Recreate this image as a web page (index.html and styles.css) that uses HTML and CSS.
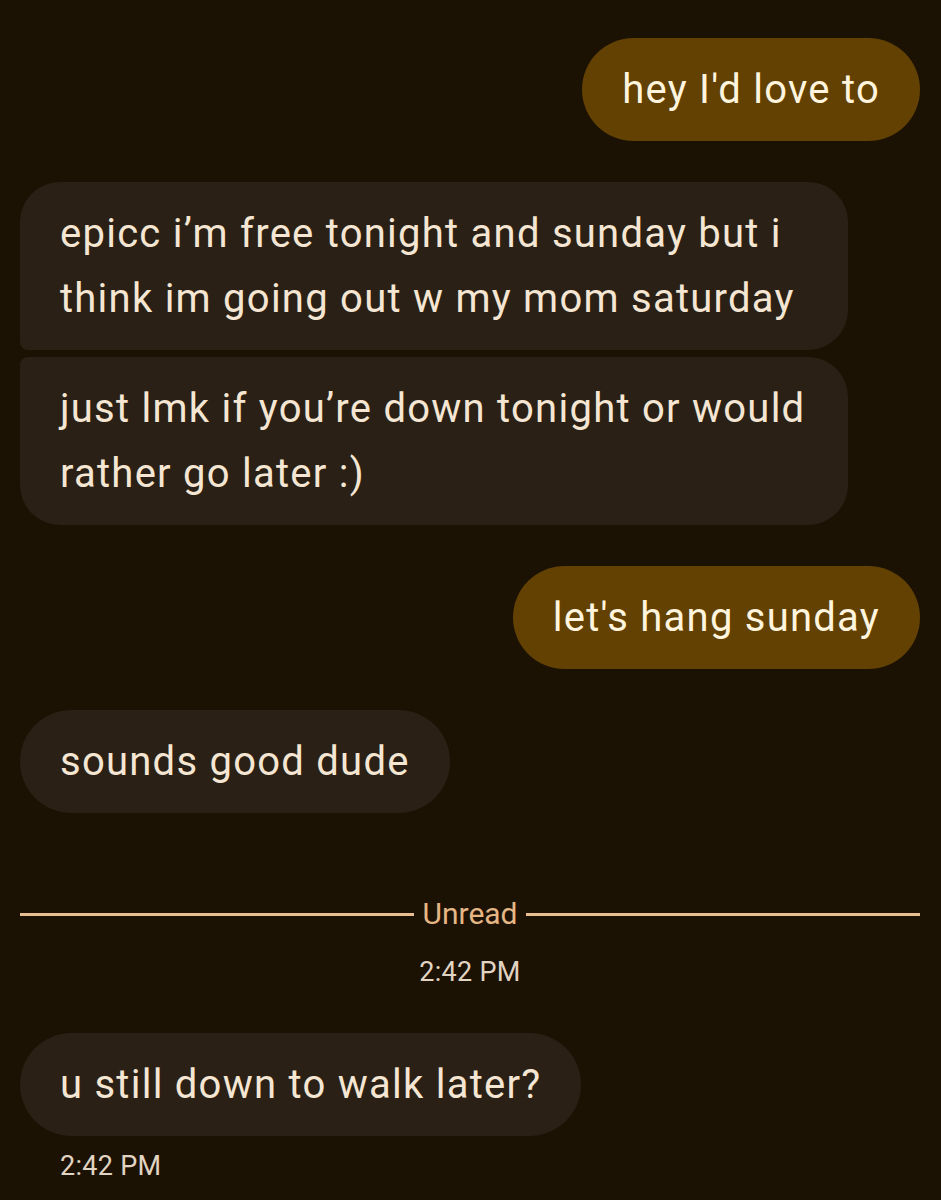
FILE: index.html
```html
<!DOCTYPE html>
<html lang="en">
<head>
    <meta charset="UTF-8">
    <meta name="viewport" content="width=device-width, initial-scale=1.0">
    <title>Messages</title>
    <link rel="stylesheet" href="styles.css">
</head>
<body>
    <div class="thread">
        <div class="row sent">
            <div class="bubble">hey I'd love to</div>
        </div>

        <!-- grouped incoming messages -->
        <div class="group">
            <div class="row received">
                <div class="bubble first">epicc i’m free tonight and sunday but i think im going out w my mom saturday</div>
            </div>
            <div class="row received">
                <div class="bubble last">just lmk if you’re down tonight or would rather go later :)</div>
            </div>
        </div>

        <div class="row sent">
            <div class="bubble">let's hang sunday</div>
        </div>

        <div class="row received">
            <div class="bubble">sounds good dude</div>
        </div>

        <div class="unread">
            <span class="line"></span>
            <span class="unread-label">Unread</span>
            <span class="line"></span>
        </div>

        <div class="time center">2:42 PM</div>

        <div class="row received latest">
            <div class="bubble">u still down to walk later?</div>
        </div>
        <div class="time below">2:42 PM</div>
    </div>
</body>
</html>
```

FILE: styles.css
```css
/* General Reset */
* {
    margin: 0;
    padding: 0;
    box-sizing: border-box;
}

body {
    font-family: Roboto, "Noto Sans", sans-serif;
    background-color: #1c1204; /* dark brown */
    color: #f5e6d3;
    height: 1200px;
    overflow: hidden;
}

.thread {
    display: flex;
    flex-direction: column;
    gap: 41px;
    padding: 38px 21px 0 20px;
}

.group {
    display: flex;
    flex-direction: column;
    gap: 7px;
}

.row {
    display: flex;
}

.row.sent {
    justify-content: flex-end;
}

.row.latest {
    margin-top: 5px;
}

.bubble {
    font-size: 40px;
    letter-spacing: 1.25px;
    line-height: 65px;
    padding: 19px 40px;
    border-radius: 52px;
    max-width: 828px;
}

.sent .bubble {
    background: #624103;
    color: #fff4dd;
}

.received .bubble {
    background: #2a2015;
    color: #f5e6d3;
}

.received .bubble.first {
    border-radius: 40px 40px 40px 8px;
}

.received .bubble.last {
    border-radius: 8px 40px 40px 40px;
}

/* Unread divider */
.unread {
    display: flex;
    align-items: center;
    gap: 8px;
    margin-top: 43px;
}

.unread .line {
    flex: 1;
    height: 3px;
    background: #e8bd92;
}

.unread-label {
    color: #e6b685;
    font-size: 30px;
    line-height: 34px;
}

.time {
    font-size: 27px;
    letter-spacing: 0.3px;
    color: #e2d4c2;
    line-height: 30px;
}

.time.center {
    text-align: center;
    margin-top: -15px;
}

.time.below {
    padding-left: 40px;
    margin-top: -26px;
}
```
